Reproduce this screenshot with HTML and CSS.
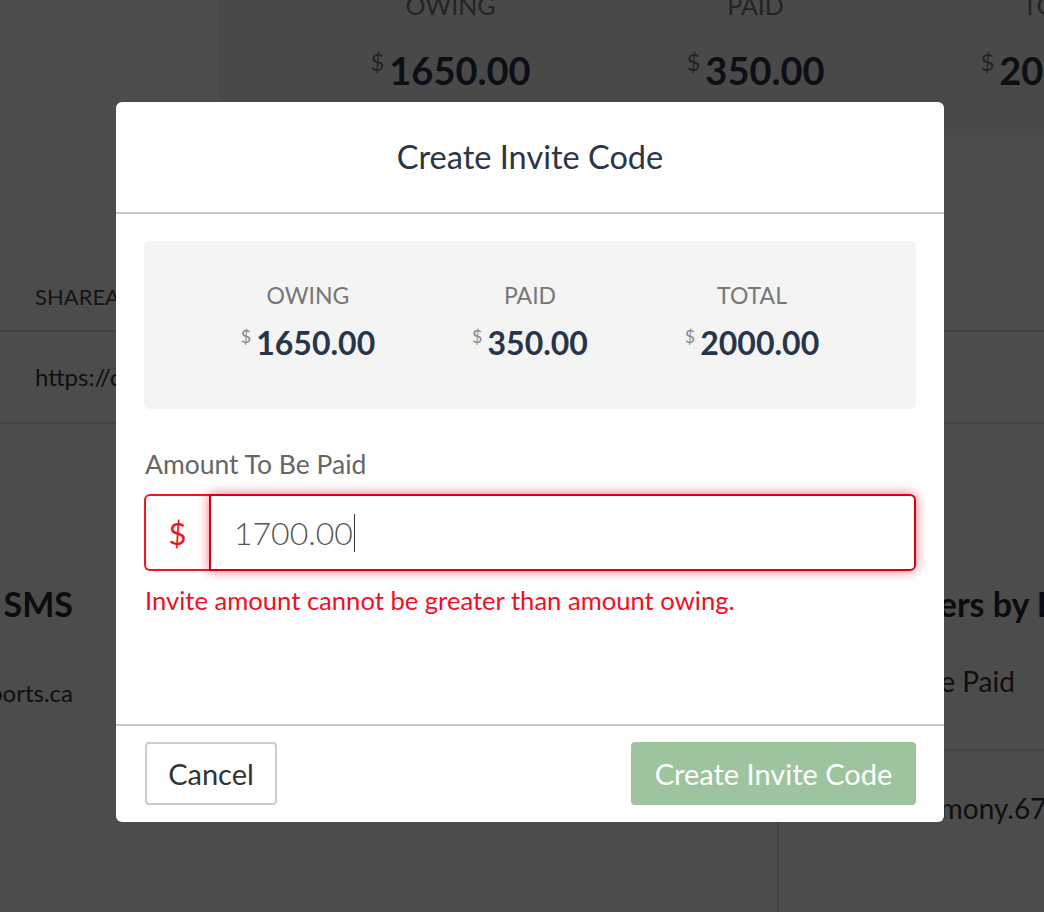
FILE: index.html
```html
<!DOCTYPE html>
<html lang="en">
<head>
<meta charset="utf-8">
<title>Create Invite Code</title>
<link rel="stylesheet" href="styles.css">
</head>
<body>
<div class="page">
  <div class="top">
    <div class="top-spacer"></div>
    <div class="bg-stats">
      <div class="bg-stat"><div class="bg-label">Owing</div><div class="bg-value"><span class="bg-cur">$</span>1650.00</div></div>
      <div class="bg-stat"><div class="bg-label">Paid</div><div class="bg-value"><span class="bg-cur">$</span>350.00</div></div>
      <div class="bg-stat"><div class="bg-label">Total</div><div class="bg-value"><span class="bg-cur">$</span>2000.00</div></div>
    </div>
  </div>
  <div class="share">
    <div class="share-head">Shareable Link</div>
    <div class="share-row">https://clubsports.ca/invite/8F3K2Q</div>
  </div>
  <div class="lower">
    <div class="lower-left">
      <div class="sms">
        <h2 class="bg-h2">Send Invite by SMS</h2>
        <p class="bg-text">support@clubsports.ca</p>
      </div>
    </div>
    <div class="lower-right">
      <h2 class="bg-h2 rh">Invite Players by Email</h2>
      <div class="col-head">Amount To Be Paid</div>
      <div class="col-row"><div class="col-cell-empty"></div><div class="col-cell">harmony.67@gmail.com</div></div>
    </div>
  </div>
</div>

<div class="overlay">
  <div class="modal">
    <div class="modal-header">
      <h1 class="modal-title">Create Invite Code</h1>
    </div>
    <div class="modal-body">
      <div class="stats">
        <div class="stat">
          <div class="stat-label">Owing</div>
          <div class="stat-value"><span class="cur">$</span>1650.00</div>
        </div>
        <div class="stat">
          <div class="stat-label">Paid</div>
          <div class="stat-value"><span class="cur">$</span>350.00</div>
        </div>
        <div class="stat">
          <div class="stat-label">Total</div>
          <div class="stat-value"><span class="cur">$</span>2000.00</div>
        </div>
      </div>
      <label class="field-label">Amount To Be Paid</label>
      <div class="input-group">
        <span class="addon">$</span>
        <div class="input"><span>1700.00</span><span class="caret"></span></div>
      </div>
      <div class="error">Invite amount cannot be greater than amount owing.</div>
    </div>
    <div class="modal-footer">
      <button class="btn btn-cancel">Cancel</button>
      <button class="btn btn-create">Create Invite Code</button>
    </div>
  </div>
</div>
</body>
</html>
```

FILE: styles.css
```css
* { box-sizing: border-box; }
html, body {
  margin: 0;
  padding: 0;
  width: 1044px;
  height: 912px;
  overflow: hidden;
  background: #fff;
  font-family: Lato, "Liberation Sans", sans-serif;
}

/* ---------- background page ---------- */
.page { width: 1044px; height: 912px; overflow: hidden; }

.top { display: flex; height: 135px; }
.top-spacer { width: 218px; flex: none; }
.bg-stats {
  flex: 1;
  display: flex;
  background: #f4f4f4;
  padding-left: 80px;
  overflow: hidden;
}
.bg-stat { width: 305px; flex: none; text-align: center; }
.bg-label {
  margin-top: -9px;
  font-size: 25px;
  line-height: 29px;
  color: #777;
  text-transform: uppercase;
}
.bg-value {
  margin-top: 19px;
  font-size: 38px;
  line-height: 45px;
  font-weight: 700;
  color: #2a3547;
  white-space: nowrap;
}
.bg-cur { font-size: 24px; font-weight: 400; color: #777; vertical-align: 14px; margin-right: 5px; }

.share { margin-top: 128px; }
.share-head {
  height: 69px;
  line-height: 67px;
  padding-left: 35px;
  border-bottom: 2px solid #ddd;
  font-size: 22px;
  color: #444;
  text-transform: uppercase;
  white-space: nowrap;
}
.share-row {
  height: 92px;
  line-height: 90px;
  padding-left: 35px;
  border-bottom: 2px solid #ddd;
  font-size: 24px;
  color: #333;
  white-space: nowrap;
}

.lower { display: flex; }
.lower-left { width: 777px; flex: none; }
.sms {
  width: 73px;
  display: flex;
  flex-direction: column;
  align-items: flex-end;
  padding-top: 160px;
}
.bg-h2 {
  margin: 0;
  font-size: 34px;
  line-height: 40px;
  font-weight: 700;
  color: #222b36;
  white-space: nowrap;
}
.bg-text {
  margin: 55px 0 0;
  font-size: 24px;
  line-height: 28px;
  color: #333;
  white-space: nowrap;
}
.lower-right { flex: 1; padding-top: 160px; }
.rh { padding-left: 4px; }
.col-head {
  margin-top: 40px;
  padding: 0 0 51px 4px;
  font-size: 28px;
  line-height: 34px;
  color: #333;
  border-bottom: 2px solid #ddd;
  white-space: nowrap;
}
.col-row { display: flex; border-left: 2px solid #ddd; height: 200px; }
.col-cell-empty { width: 100px; flex: none; }
.col-cell {
  padding: 40px 0 0 21px;
  font-size: 28px;
  line-height: 34px;
  color: #333;
  white-space: nowrap;
}

/* ---------- overlay + modal ---------- */
.overlay {
  position: fixed;
  inset: 0;
  background: rgba(0, 0, 0, 0.7);
}
.modal {
  margin: 102px 0 0 116px;
  width: 828px;
  height: 720px;
  background: #fff;
  border-radius: 6px;
  display: flex;
  flex-direction: column;
}
.modal-header {
  height: 112px;
  border-bottom: 2px solid #c8c8c8;
  display: flex;
  align-items: center;
  justify-content: center;
  padding-bottom: 2px;
}
.modal-title {
  margin: 0;
  font-size: 32.5px;
  font-weight: 400;
  color: #2a3547;
}
.modal-body {
  flex: 1;
  padding: 27px 28px 0;
}
.stats {
  height: 168px;
  background: #f4f4f4;
  border-radius: 6px;
  display: flex;
  justify-content: center;
  padding-top: 40px;
}
.stat { width: 222px; text-align: center; }
.stat-label {
  font-size: 23px;
  line-height: 29px;
  color: #777;
  text-transform: uppercase;
}
.stat-value {
  margin-top: 7px;
  font-size: 32px;
  line-height: 38px;
  font-weight: 700;
  color: #283449;
  white-space: nowrap;
}
.cur {
  font-size: 18px;
  font-weight: 400;
  color: #888;
  vertical-align: 12px;
  margin-right: 5px;
}

.field-label {
  display: block;
  margin-top: 40px;
  padding-left: 1px;
  font-size: 26.5px;
  line-height: 31px;
  color: #666;
}
.input-group {
  display: flex;
  height: 77px;
  margin-top: 14px;
}
.addon {
  width: 65px;
  flex: none;
  border: 2px solid #f3131f;
  border-right: 0;
  border-radius: 6px 0 0 6px;
  display: flex;
  align-items: center;
  justify-content: center;
  font-size: 31px;
  color: #f3131f;
}
.input {
  flex: 1;
  border: 2px solid #d0021b;
  border-radius: 0 6px 6px 0;
  box-shadow: 0 0 12px rgba(240, 10, 30, 0.6);
  display: flex;
  align-items: center;
  padding-left: 23px;
  font-size: 32px;
  font-weight: 300;
  color: #555;
}
.caret {
  display: inline-block;
  width: 1px;
  height: 38px;
  background: #333;
  margin-left: 1px;
}
.error {
  margin-top: 14px;
  padding-left: 1px;
  font-size: 25.6px;
  line-height: 30px;
  color: #f80c1f;
}

.modal-footer {
  height: 98px;
  border-top: 2px solid #c8c8c8;
  display: flex;
  justify-content: space-between;
  align-items: flex-start;
  padding: 16px 28px 0 29px;
}
.btn {
  height: 63px;
  border-radius: 4px;
  font-family: Lato, "Liberation Sans", sans-serif;
  font-size: 29px;
  cursor: pointer;
  padding: 0;
}
.btn-cancel {
  width: 132px;
  background: #fff;
  border: 2px solid #ccc;
  color: #333;
}
.btn-create {
  width: 285px;
  background: #9dc49f;
  border: 0;
  color: #fff;
}
```
